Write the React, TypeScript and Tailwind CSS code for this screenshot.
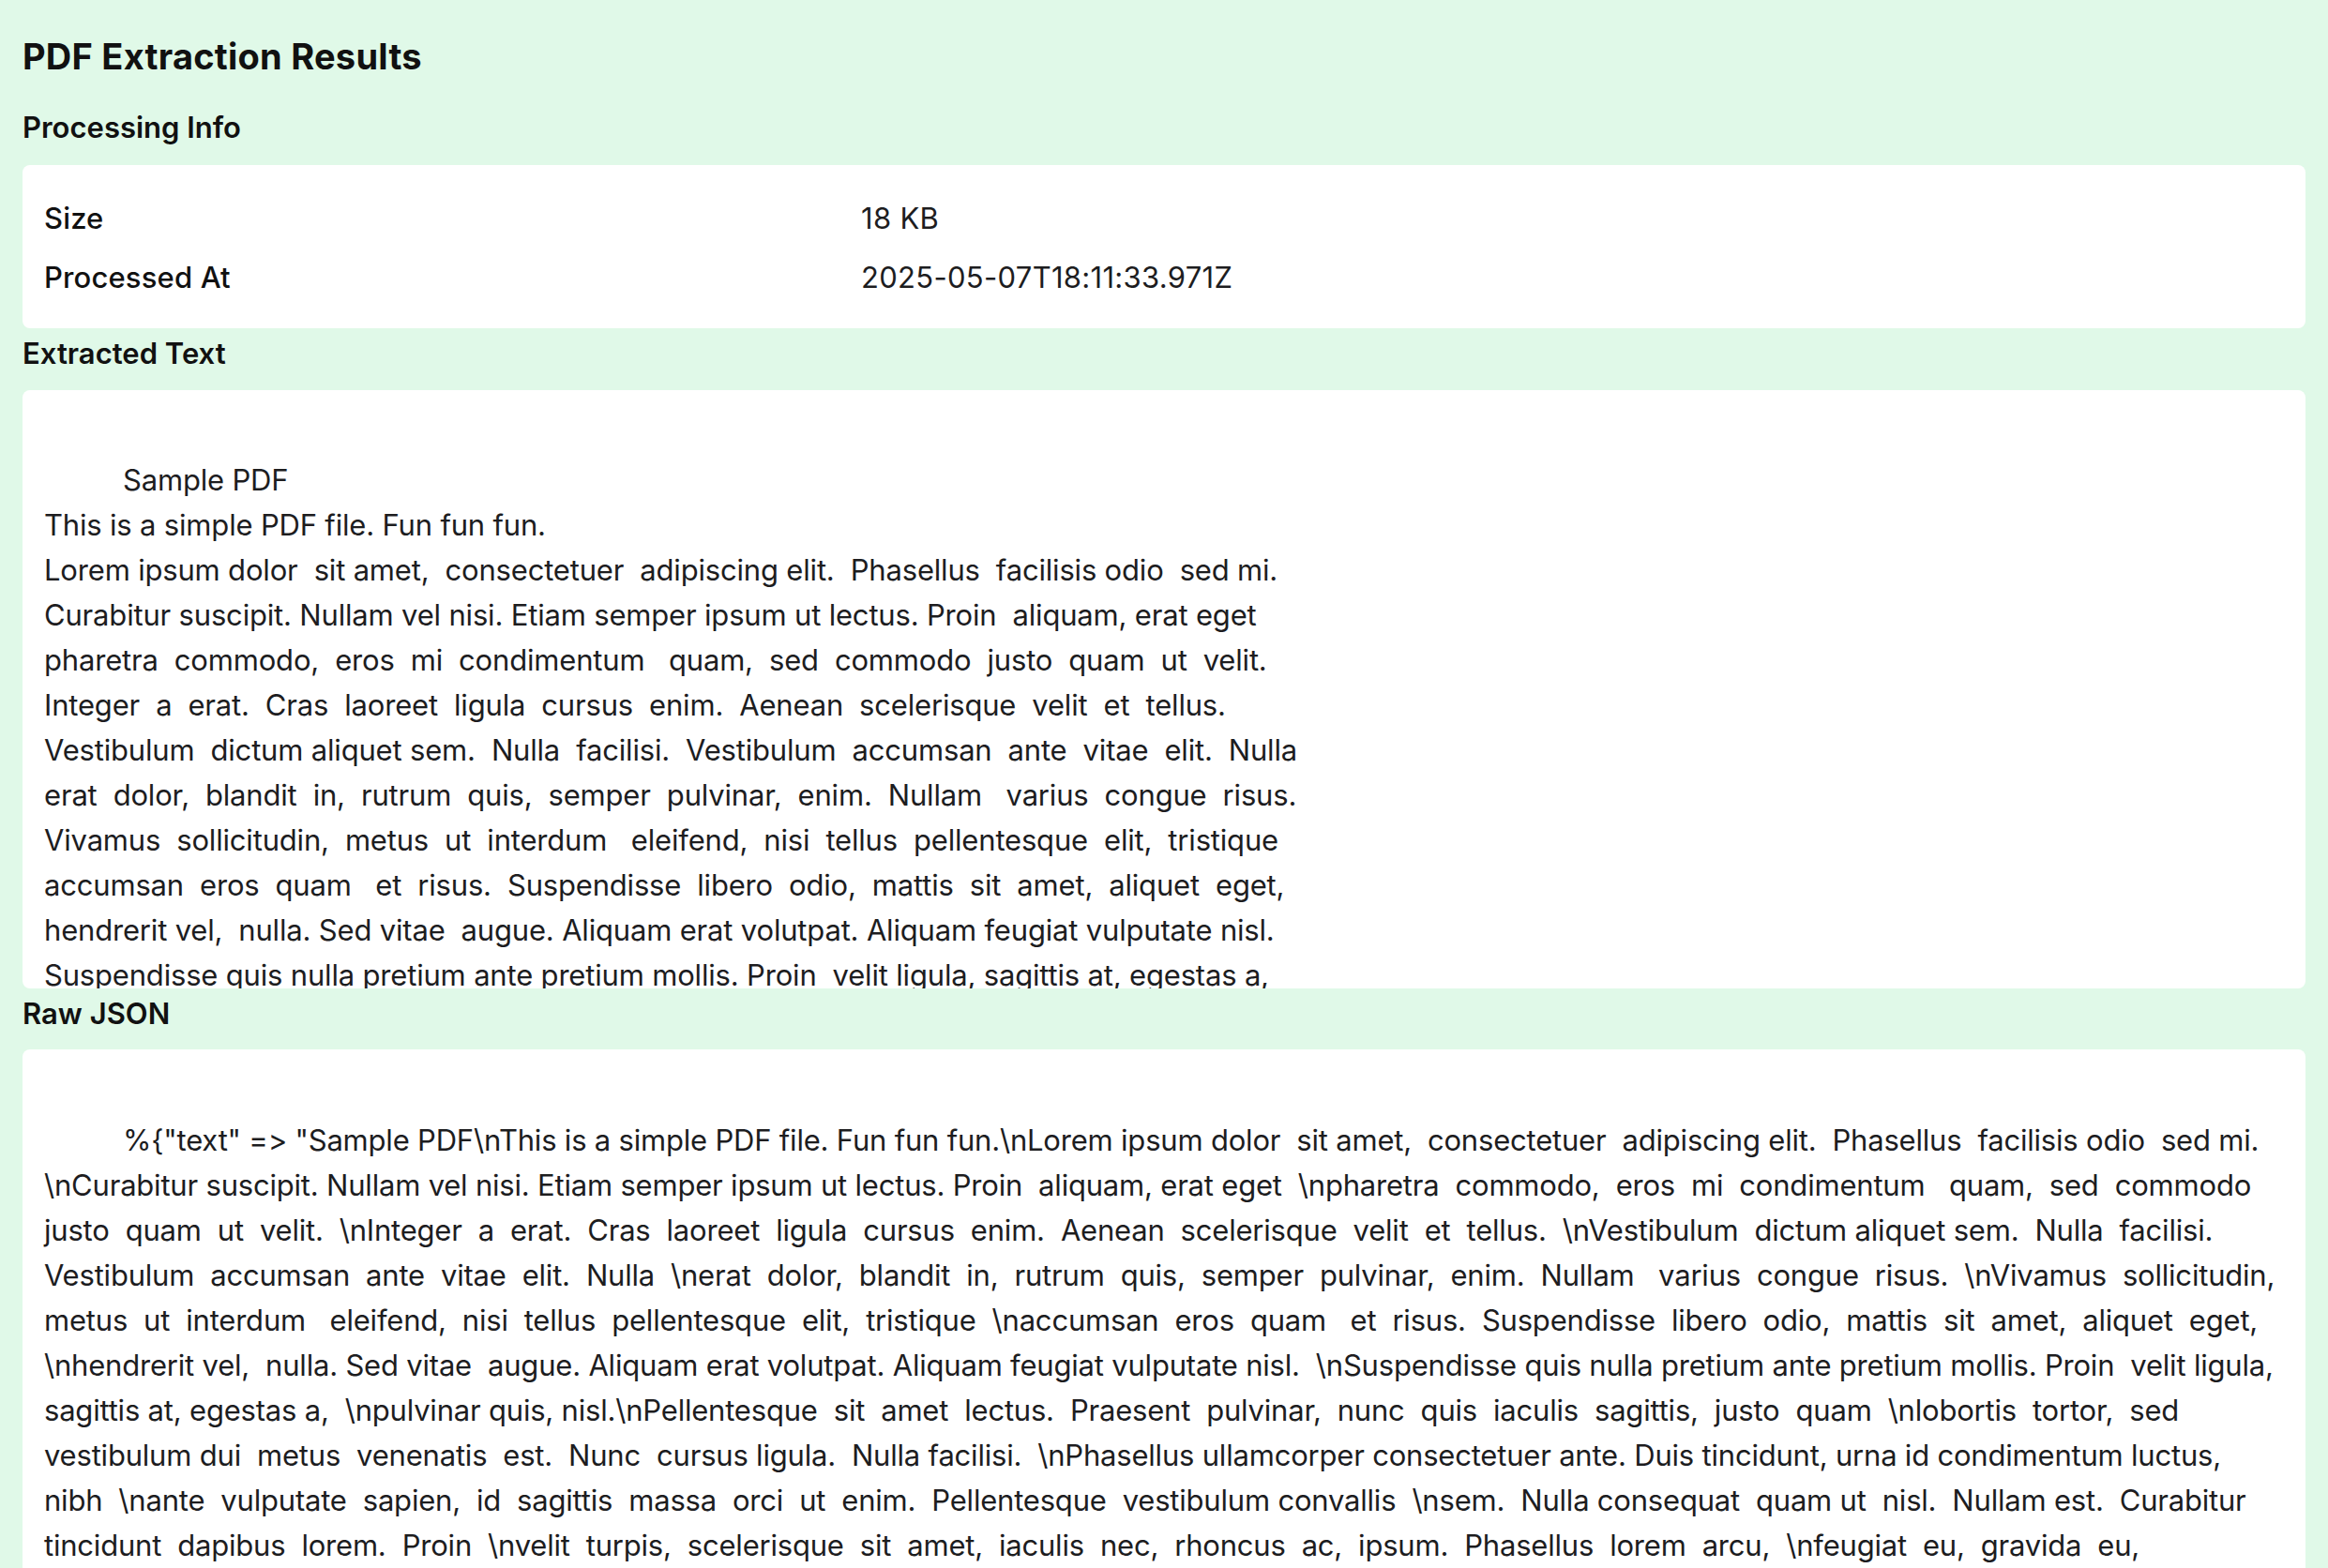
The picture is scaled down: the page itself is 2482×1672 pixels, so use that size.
import React from "react";

const extracted: string[] = [
  "",
  "__INDENT__Sample PDF",
  "This is a simple PDF file. Fun fun fun.",
  "Lorem ipsum dolor  sit amet,  consectetuer  adipiscing elit.  Phasellus  facilisis odio  sed mi.",
  "Curabitur suscipit. Nullam vel nisi. Etiam semper ipsum ut lectus. Proin  aliquam, erat eget",
  "pharetra  commodo,  eros  mi  condimentum   quam,  sed  commodo  justo  quam  ut  velit.",
  "Integer  a  erat.  Cras  laoreet  ligula  cursus  enim.  Aenean  scelerisque  velit  et  tellus.",
  "Vestibulum  dictum aliquet sem.  Nulla  facilisi.  Vestibulum  accumsan  ante  vitae  elit.  Nulla",
  "erat  dolor,  blandit  in,  rutrum  quis,  semper  pulvinar,  enim.  Nullam   varius  congue  risus.",
  "Vivamus  sollicitudin,  metus  ut  interdum   eleifend,  nisi  tellus  pellentesque  elit,  tristique",
  "accumsan  eros  quam   et  risus.  Suspendisse  libero  odio,  mattis  sit  amet,  aliquet  eget,",
  "hendrerit vel,  nulla. Sed vitae  augue. Aliquam erat volutpat. Aliquam feugiat vulputate nisl.",
  "Suspendisse quis nulla pretium ante pretium mollis. Proin  velit ligula, sagittis at, egestas a,",
  "pulvinar quis, nisl.",
  "Pellentesque  sit  amet  lectus.  Praesent  pulvinar,  nunc  quis  iaculis  sagittis,  justo  quam",
];

const raw: string[] = [
  "",
  "__INDENT__%{\"text\" => \"Sample PDF\\nThis is a simple PDF file. Fun fun fun.\\nLorem ipsum dolor  sit amet,  consectetuer  adipiscing elit.  Phasellus  facilisis odio  sed mi.",
  "\\nCurabitur suscipit. Nullam vel nisi. Etiam semper ipsum ut lectus. Proin  aliquam, erat eget  \\npharetra  commodo,  eros  mi  condimentum   quam,  sed  commodo",
  "justo  quam  ut  velit.  \\nInteger  a  erat.  Cras  laoreet  ligula  cursus  enim.  Aenean  scelerisque  velit  et  tellus.  \\nVestibulum  dictum aliquet sem.  Nulla  facilisi.",
  "Vestibulum  accumsan  ante  vitae  elit.  Nulla  \\nerat  dolor,  blandit  in,  rutrum  quis,  semper  pulvinar,  enim.  Nullam   varius  congue  risus.  \\nVivamus  sollicitudin,",
  "metus  ut  interdum   eleifend,  nisi  tellus  pellentesque  elit,  tristique  \\naccumsan  eros  quam   et  risus.  Suspendisse  libero  odio,  mattis  sit  amet,  aliquet  eget,",
  "\\nhendrerit vel,  nulla. Sed vitae  augue. Aliquam erat volutpat. Aliquam feugiat vulputate nisl.  \\nSuspendisse quis nulla pretium ante pretium mollis. Proin  velit ligula,",
  "sagittis at, egestas a,  \\npulvinar quis, nisl.\\nPellentesque  sit  amet  lectus.  Praesent  pulvinar,  nunc  quis  iaculis  sagittis,  justo  quam  \\nlobortis  tortor,  sed",
  "vestibulum dui  metus  venenatis  est.  Nunc  cursus ligula.  Nulla facilisi.  \\nPhasellus ullamcorper consectetuer ante. Duis tincidunt, urna id condimentum luctus,",
  "nibh  \\nante  vulputate  sapien,  id  sagittis  massa  orci  ut  enim.  Pellentesque  vestibulum convallis  \\nsem.  Nulla consequat  quam ut  nisl.  Nullam est.  Curabitur",
  "tincidunt  dapibus  lorem.  Proin  \\nvelit  turpis,  scelerisque  sit  amet,  iaculis  nec,  rhoncus  ac,  ipsum.  Phasellus  lorem  arcu,  \\nfeugiat  eu,  gravida  eu,",
  "consequat  vitae,  tortor.  Aenean  lorem  mauris,  iaculis  ut,  dapibus  quis,  \\nvestibulum  sit  amet,  dui.\"}",
];

function Lines({ lines }: { lines: string[] }) {
  return (
    <>
      {lines.map((l, i) => {
        const indent = l.startsWith("__INDENT__");
        const text = indent ? l.slice(10) : l;
        return (
          <div
            key={i}
            className={`h-[48px] leading-[48px] whitespace-pre ${indent ? "pl-[84px]" : ""}`}
          >
            {text || "\u00a0"}
          </div>
        );
      })}
    </>
  );
}

export default function App() {
  return (
    <div
      className="min-h-screen bg-[#e0f9e8] px-[24px] pt-[24px] text-[#1d1d1f]"
      style={{ fontFamily: "Inter, 'Noto Sans', sans-serif" }}
    >
      <h1 className="text-[38px] leading-[72px] font-bold tracking-[0.25px] text-[#111]">
        PDF Extraction Results
      </h1>

      <h2 className="mt-[16px] mb-[16px] text-[31px] leading-[48px] font-semibold tracking-[0px] text-[#111]">
        Processing Info
      </h2>
      <div className="rounded-[8px] bg-white px-[23px] pt-[25px] pb-[23px]">
        <div className="grid grid-cols-[871px_1fr] text-[31px]">
          <div className="h-[63px] leading-[63px] font-medium tracking-[0.15px] text-[#111]">Size</div>
          <div className="h-[63px] leading-[63px] tracking-[0.3px]">18 KB</div>
          <div className="h-[63px] leading-[63px] font-medium tracking-[0.15px] text-[#111]">Processed At</div>
          <div className="h-[63px] leading-[63px] tracking-[0.3px]">2025-05-07T18:11:33.971Z</div>
        </div>
      </div>

      <h2 className="mt-[3px] mb-[15px] text-[31px] leading-[48px] font-semibold tracking-[0px] text-[#111]">
        Extracted Text
      </h2>
      <div className="h-[638px] overflow-hidden rounded-[8px] bg-white px-[23px] pt-[24px] text-[31px] tracking-[-0.18px]">
        <Lines lines={extracted} />
      </div>

      <h2 className="mt-[3px] mb-[14px] text-[31px] leading-[48px] font-semibold tracking-[0px] text-[#111]">
        Raw JSON
      </h2>
      <div className="rounded-[8px] bg-white px-[23px] pt-[25px] pb-[24px] text-[31px] tracking-[-0.2px]">
        <Lines lines={raw} />
      </div>
    </div>
  );
}
